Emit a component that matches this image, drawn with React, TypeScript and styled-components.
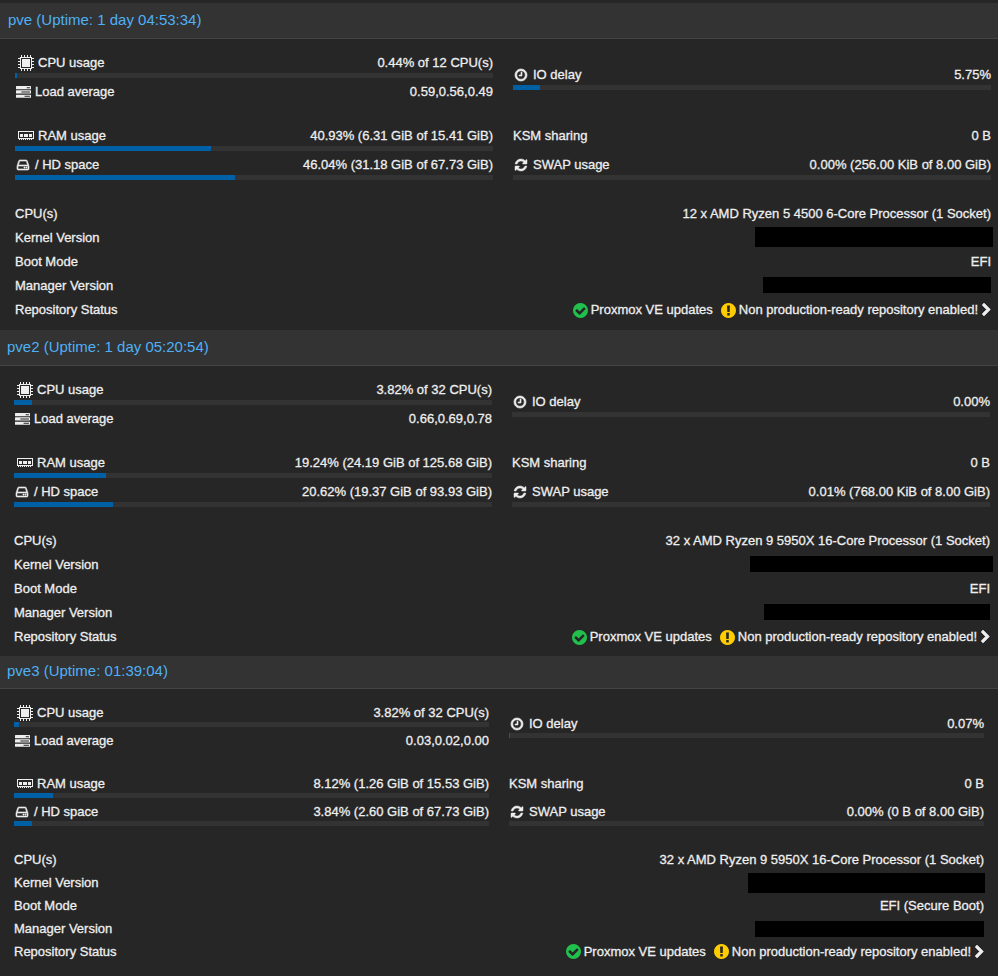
import React from 'react';
import styled, { createGlobalStyle, css } from 'styled-components';

const GlobalStyle = createGlobalStyle`
  * { box-sizing: border-box; }
  html { background: #262626; }
  body {
    margin: 0;
    background: #262626;
    color: #eeeeee;
    font-family: "Liberation Sans", Arial, Helvetica, sans-serif;
    font-size: 13px;
    line-height: 18px;
  }
`;

type Density = 'normal' | 'shifted' | 'compact';

const Page = styled.main`
  padding-top: 3px;
`;

const Panel = styled.section`
  display: flex;
  flex-direction: column;
`;

const PanelHeader = styled.header<{ $density: Density }>`
  display: flex;
  align-items: center;
  height: ${p => (p.$density === 'compact' ? 33 : 36)}px;
  padding: 0 ${p => (p.$density === 'normal' ? 8 : 7)}px 2px;
  background: #333333;
  border-bottom: 1px solid #434343;
`;

const Title = styled.h2`
  margin: 0;
  color: #4fb0f5;
  font-size: 15px;
  line-height: 18px;
  font-weight: 400;
`;

const bodyPadding = {
  normal: '15px 7px 9px 15px',
  shifted: '15px 8px 8px 14px',
  compact: '15px 14px 13px 14px',
};

const PanelBody = styled.div<{ $density: Density }>`
  padding: ${p => bodyPadding[p.$density]};
  -webkit-text-stroke: 0.3px #eeeeee;
`;

const Columns = styled.div`
  display: grid;
  grid-template-columns: 1fr 1fr;
  column-gap: 20px;
  row-gap: 15px;
`;

const Cell = styled.div<{ $drop?: number }>`
  display: flex;
  flex-direction: column;
  ${p => p.$drop !== undefined && css`padding-top: ${p.$drop}px;`}
`;

const Meter = styled.div<{ $density: Density }>`
  display: flex;
  flex-direction: column;
  gap: ${p => (p.$density === 'compact' ? 0 : 1)}px;
  height: ${p => (p.$density === 'compact' ? 28 : 29)}px;
`;

const Line = styled.div`
  display: flex;
  justify-content: space-between;
  white-space: nowrap;
`;

const Label = styled.span`
  display: flex;
  align-items: center;
  gap: 4px;
`;

const IconSlot = styled.span<{ $inset?: boolean }>`
  display: flex;
  justify-content: center;
  width: 16px;
  margin-left: ${p => (p.$inset ? 3 : 0)}px;
  svg { display: block; }
`;

const Track = styled.div`
  height: 5px;
  background: #333333;
`;

const Fill = styled.div`
  height: 100%;
  background: #0060a6;
`;

const InfoList = styled.dl<{ $density: Density }>`
  margin: ${p => (p.$density === 'compact' ? 17 : 16)}px 0 0;
`;

const InfoRow = styled.div<{ $density: Density }>`
  display: flex;
  justify-content: space-between;
  align-items: center;
  height: ${p => (p.$density === 'compact' ? 23 : 24)}px;
  dt, dd {
    margin: 0;
    padding-top: ${p => (p.$density === 'compact' ? 0 : 2)}px;
    white-space: nowrap;
  }
`;

const Redacted = styled.dd<{ $width: number; $tall?: boolean; $bleed?: number }>`
  width: ${p => p.$width}px;
  height: ${p => (p.$tall ? 20 : 16)}px;
  background: #000000;
  && { margin-right: -${p => p.$bleed ?? 0}px; }
`;

const Repo = styled.dd`
  display: flex;
  align-items: center;
  gap: 4px;
`;

const RepoItem = styled.span`
  display: flex;
  align-items: center;
  gap: 3px;
  &:first-of-type { margin-right: 4px; }
`;

const DetailsLink = styled.a`
  display: flex;
  color: inherit;
`;

const paths = {
  clock: 'M1024 544v448q0 14-9 23t-23 9h-320q-14 0-23-9t-9-23v-64q0-14 9-23t23-9h224v-352q0-14 9-23t23-9h64q14 0 23 9t9 23zm416 352q0-148-73-273t-198-198-273-73-273 73-198 198-73 273 73 273 198 198 273 73 273-73 198-198 73-273zm224 0q0 209-103 385.5t-279.5 279.5-385.5 103-385.5-103-279.5-279.5-103-385.5 103-385.5 279.5-279.5 385.5-103 385.5 103 279.5 279.5 103 385.5z',
  refresh: 'M1639 1056q0 5-1 7-64 268-268 434.5t-478 166.5q-146 0-282.5-55t-243.5-157l-129 129q-19 19-45 19t-45-19-19-45v-448q0-26 19-45t45-19h448q26 0 45 19t19 45-19 45l-137 137q71 66 161 102t187 36q134 0 250-65t186-179q11-17 53-117 8-23 30-23h192q13 0 22.5 9.5t9.5 22.5zm25-800v448q0 26-19 45t-45 19h-448q-26 0-45-19t-19-45 19-45l138-138q-148-137-349-137-134 0-250 65t-186 179q-11 17-53 117-8 23-30 23h-199q-13 0-22.5-9.5t-9.5-22.5v-7q65-268 270-434.5t480-166.5q146 0 284 55.5t245 156.5l130-129q19-19 45-19t45 19 19 45z',
  hdd: 'M1168 1216q0 33-23.5 56.5t-56.5 23.5-56.5-23.5-23.5-56.5 23.5-56.5 56.5-23.5 56.5 23.5 23.5 56.5zm256 0q0 33-23.5 56.5t-56.5 23.5-56.5-23.5-23.5-56.5 23.5-56.5 56.5-23.5 56.5 23.5 23.5 56.5zm112 160v-320q0-13-9.5-22.5t-22.5-9.5h-1216q-13 0-22.5 9.5t-9.5 22.5v320q0 13 9.5 22.5t22.5 9.5h1216q13 0 22.5-9.5t9.5-22.5zm-1230-480h1180l-157-482q-4-13-16-21.5t-26-8.5h-782q-14 0-26 8.5t-16 21.5zm1358 160v320q0 66-47 113t-113 47h-1216q-66 0-113-47t-47-113v-320q0-25 16-75l197-606q17-53 63-86t101-33h782q55 0 101 33t63 86l197 606q16 50 16 75z',
  tasks: 'M1024 1408h640v-128h-640v128zm-384-512h1024v-128h-1024v128zm640-512h384v-128h-384v128zm512 832v256q0 26-19 45t-45 19h-1664q-26 0-45-19t-19-45v-256q0-26 19-45t45-19h1664q26 0 45 19t19 45zm0-512v256q0 26-19 45t-45 19h-1664q-26 0-45-19t-19-45v-256q0-26 19-45t45-19h1664q26 0 45 19t19 45zm0-512v256q0 26-19 45t-45 19h-1664q-26 0-45-19t-19-45v-256q0-26 19-45t45-19h1664q26 0 45 19t19 45z',
  check: 'M1412 734q0-28-18-46l-91-90q-19-19-45-19t-45 19l-408 407-226-226q-19-19-45-19t-45 19l-91 90q-18 18-18 46 0 27 18 45l362 362q19 19 45 19 27 0 46-19l543-543q18-18 18-45zm252 162q0 209-103 385.5t-279.5 279.5-385.5 103-385.5-103-279.5-279.5-103-385.5 103-385.5 279.5-279.5 385.5-103 385.5 103 279.5 279.5 103 385.5z',
  warning: 'M896 128q209 0 385.5 103t279.5 279.5 103 385.5-103 385.5-279.5 279.5-385.5 103-385.5-103-279.5-279.5-103-385.5 103-385.5 279.5-279.5 385.5-103zm128 1247v-190q0-14-9-23.5t-22-9.5h-192q-13 0-23 10t-10 23v190q0 13 10 23t23 10h192q13 0 22-9.5t9-23.5zm-2-344l18-621q0-12-10-18-10-8-24-8h-220q-14 0-24 8-10 6-10 18l17 621q0 10 10 17.5t24 7.5h185q14 0 23.5-7.5t10.5-17.5z',
  chevron: 'M1363 877l-742 742q-19 19-45 19t-45-19l-166-166q-19-19-19-45t19-45l531-531-531-531q-19-19-19-45t19-45l166-166q19-19 45-19t45 19l742 742q19 19 19 45t-19 45z',
};

type GlyphName = keyof typeof paths;

const Glyph = ({ name, size = 15, color = '#eeeeee', box = '0 0 1792 1792', width, stroke = 0 }: {
  name: GlyphName; size?: number; color?: string; box?: string; width?: number; stroke?: number;
}) => (
  <svg
    width={width ?? size}
    height={size}
    viewBox={box}
    fill={color}
    stroke={stroke ? color : 'none'}
    strokeWidth={stroke}
    aria-hidden="true"
  >
    <path d={paths[name]} />
  </svg>
);

const CpuIcon = () => (
  <svg width="16" height="16" viewBox="0 0 16 16" fill="#eeeeee" aria-hidden="true">
    <path fillRule="evenodd" d="M2 2h12v12H2zM3 3v10h10V3z" />
    <path d="M4 4h8v8H4z" />
    <path d="M3 0h1v2H3zM6 0h1v2H6zM9 0h1v2H9zM12 0h1v2h-1zM3 14h1v2H3zM6 14h1v2H6zM9 14h1v2H9zM12 14h1v2h-1zM0 3h2v1H0zM0 6h2v1H0zM0 9h2v1H0zM0 12h2v1H0zM14 3h2v1h-2zM14 6h2v1h-2zM14 9h2v1h-2zM14 12h2v1h-2z" />
  </svg>
);

const RamIcon = () => (
  <svg width="16" height="16" viewBox="0 0 16 16" fill="#eeeeee" aria-hidden="true">
    <path fillRule="evenodd" d="M0 3h16v8H0zM1 4v6h14V4z" />
    <path d="M2 6h3v3H2zM6 6h4v3H6zM11 6h3v3h-3zM1 11h1v1H1zM3 11h1v1H3zM5 11h1v1H5zM7 11h1v1H7zM9 11h1v1H9zM11 11h1v1h-1zM13 11h1v1h-1z" />
  </svg>
);

interface NodeData {
  name: string;
  uptime: string;
  density: Density;
  cpu: [string, number];
  load: string;
  io: [string, number];
  ram: [string, number];
  hd: [string, number];
  swap: [string, number];
  model: string;
  boot: string;
  kernelWidth: number;
  kernelTall: boolean;
  kernelBleed: number;
  managerWidth: number;
}

const nodes: NodeData[] = [
  {
    name: 'pve', uptime: '1 day 04:53:34', density: 'normal',
    cpu: ['0.44% of 12 CPU(s)', 0.44], load: '0.59,0.56,0.49', io: ['5.75%', 5.75],
    ram: ['40.93% (6.31 GiB of 15.41 GiB)', 40.93],
    hd: ['46.04% (31.18 GiB of 67.73 GiB)', 46.04],
    swap: ['0.00% (256.00 KiB of 8.00 GiB)', 0],
    model: '12 x AMD Ryzen 5 4500 6-Core Processor (1 Socket)', boot: 'EFI',
    kernelWidth: 238, kernelTall: true, kernelBleed: 2, managerWidth: 228,
  },
  {
    name: 'pve2', uptime: '1 day 05:20:54', density: 'shifted',
    cpu: ['3.82% of 32 CPU(s)', 3.82], load: '0.66,0.69,0.78', io: ['0.00%', 0],
    ram: ['19.24% (24.19 GiB of 125.68 GiB)', 19.24],
    hd: ['20.62% (19.37 GiB of 93.93 GiB)', 20.62],
    swap: ['0.01% (768.00 KiB of 8.00 GiB)', 0],
    model: '32 x AMD Ryzen 9 5950X 16-Core Processor (1 Socket)', boot: 'EFI',
    kernelWidth: 243, kernelTall: false, kernelBleed: 3, managerWidth: 226,
  },
  {
    name: 'pve3', uptime: '01:39:04', density: 'compact',
    cpu: ['3.82% of 32 CPU(s)', 1], load: '0.03,0.02,0.00', io: ['0.07%', 0.2],
    ram: ['8.12% (1.26 GiB of 15.53 GiB)', 8.12],
    hd: ['3.84% (2.60 GiB of 67.73 GiB)', 3.84],
    swap: ['0.00% (0 B of 8.00 GiB)', 0],
    model: '32 x AMD Ryzen 9 5950X 16-Core Processor (1 Socket)', boot: 'EFI (Secure Boot)',
    kernelWidth: 237, kernelTall: true, kernelBleed: 1, managerWidth: 229,
  },
];

const Usage = ({ icon, inset, label, value, percent, density }: {
  icon?: React.ReactNode; inset?: boolean; label: string; value: string; percent?: number; density: Density;
}) => (
  <Meter $density={density}>
    <Line>
      <Label>
        {icon && <IconSlot $inset={inset}>{icon}</IconSlot>}
        {label}
      </Label>
      <span>{value}</span>
    </Line>
    {percent !== undefined && <Track><Fill style={{ width: `${percent}%` }} /></Track>}
  </Meter>
);

const NodePanel = ({ node }: { node: NodeData }) => {
  const d = node.density;
  return (
    <Panel>
      <PanelHeader $density={d}>
        <Title>{`${node.name} (Uptime: ${node.uptime})`}</Title>
      </PanelHeader>
      <PanelBody $density={d}>
        <Columns>
          <Cell>
            <Usage density={d} inset icon={<CpuIcon />} label="CPU usage" value={node.cpu[0]} percent={node.cpu[1]} />
            <Usage density={d} icon={<Glyph name="tasks" />} label="Load average" value={node.load} />
          </Cell>
          <Cell $drop={d === 'compact' ? 11 : 12}>
            <Usage density={d} icon={<Glyph name="clock" size={14} stroke={80} />} label="IO delay" value={node.io[0]} percent={node.io[1]} />
          </Cell>
          <Cell>
            <Usage density={d} inset icon={<RamIcon />} label="RAM usage" value={node.ram[0]} percent={node.ram[1]} />
            <Usage density={d} icon={<Glyph name="hdd" size={14} stroke={80} />} label="/ HD space" value={node.hd[0]} percent={node.hd[1]} />
          </Cell>
          <Cell>
            <Usage density={d} label="KSM sharing" value="0 B" />
            <Usage density={d} icon={<Glyph name="refresh" size={14} stroke={60} />} label="SWAP usage" value={node.swap[0]} percent={node.swap[1]} />
          </Cell>
        </Columns>
        <InfoList $density={d}>
          <InfoRow $density={d}><dt>CPU(s)</dt><dd>{node.model}</dd></InfoRow>
          <InfoRow $density={d}>
            <dt>Kernel Version</dt>
            <Redacted $width={node.kernelWidth} $tall={node.kernelTall} $bleed={node.kernelBleed} />
          </InfoRow>
          <InfoRow $density={d}><dt>Boot Mode</dt><dd>{node.boot}</dd></InfoRow>
          <InfoRow $density={d}><dt>Manager Version</dt><Redacted $width={node.managerWidth} /></InfoRow>
          <InfoRow $density={d}>
            <dt>Repository Status</dt>
            <Repo>
              <RepoItem><Glyph name="check" color="#21bf4b" box="128 128 1536 1536" />Proxmox VE updates</RepoItem>
              <RepoItem><Glyph name="warning" color="#ffcc00" box="128 128 1536 1536" />Non production-ready repository enabled!</RepoItem>
              <DetailsLink href="#repositories" aria-label="Repository details">
                <Glyph name="chevron" size={14} width={9} box="320 0 1152 1792" stroke={80} />
              </DetailsLink>
            </Repo>
          </InfoRow>
        </InfoList>
      </PanelBody>
    </Panel>
  );
};

export default function App() {
  return (
    <>
      <GlobalStyle />
      <Page>
        {nodes.map(node => <NodePanel key={node.name} node={node} />)}
      </Page>
    </>
  );
}
